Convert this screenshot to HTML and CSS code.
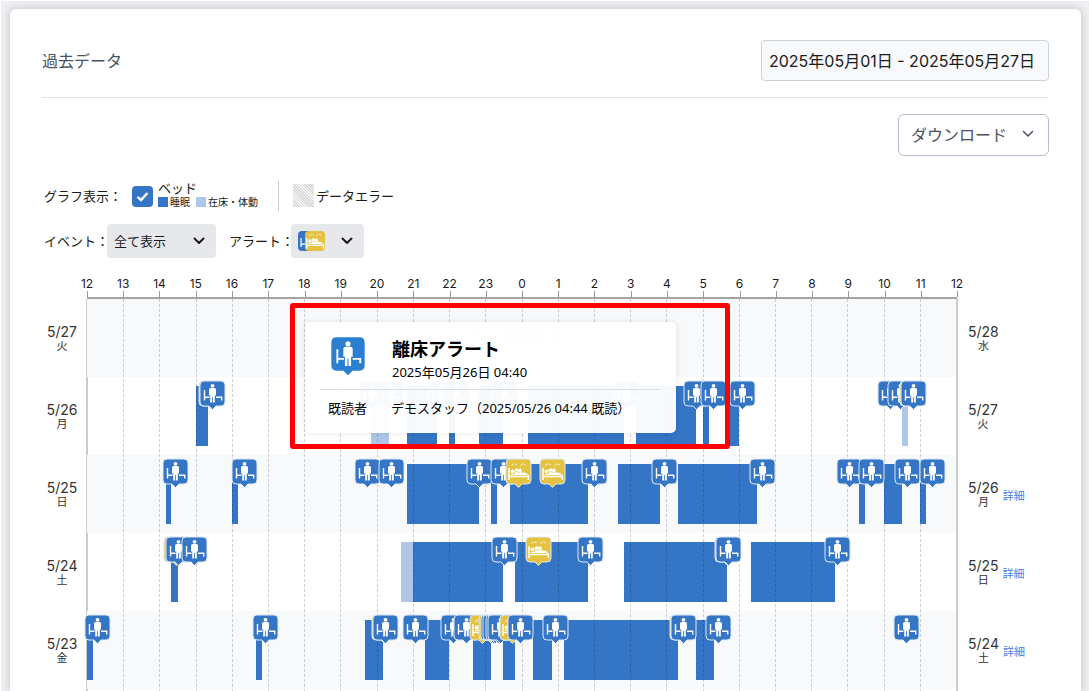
FILE: index.html
```
<!DOCTYPE html>
<html lang="ja">
<head>
    <meta charset="UTF-8">
    <meta name="viewport" content="width=device-width, initial-scale=1.0">
    <title>過去データ</title>
    <link rel="stylesheet" href="styles.css">
</head>
<body>
    <svg class="sprite" aria-hidden="true">
        <symbol id="leave" viewBox="0 0 27 30">
            <path d="M5 1H22Q26 1 26 5V22Q26 26 22 26H17L13.500 29.500L10 26H5Q1 26 1 22V5Q1 1 5 1Z"/>
            <path d="M5.500 10V20.500M5.500 17.200H10.500M17 17.200H22.700V20.500" fill="none" stroke="#fff" stroke-width="1.400"/>
            <circle cx="13.500" cy="5.800" r="1.900" fill="#fff" stroke="none"/>
            <path d="M11.500 8H15.500Q17 8 17 9.500V15.500H15.800V22.500H13.900V17H13.100V22.500H11.200V15.500H10V9.500Q10 8 11.500 8Z" fill="#fff" stroke="none"/>
        </symbol>
        <symbol id="restless" viewBox="0 0 27 30">
            <path d="M5 1H22Q26 1 26 5V22Q26 26 22 26H17L13.500 29.500L10 26H5Q1 26 1 22V5Q1 1 5 1Z"/>
            <path d="M4 10V22M4 18.500H23.300M23.300 17V22" fill="none" stroke="#fff" stroke-width="1.500"/>
            <circle cx="7.500" cy="13.500" r="2" fill="#fff" stroke="none"/>
            <path d="M6 17V16H9.500L10.500 14L9.500 11.500L12 10L13.500 11.500L15.500 10L17 12.500L16 14.500L19.500 14.500L22.500 16V17Z" fill="#fff" stroke="none"/>
            <path d="M11.500 13.500L14.500 14.500" fill="none" stroke="#e5c23f" stroke-width="0.900"/>
            <path d="M6.500 7.500L8.500 6H10.500L12 7.500M15.500 7.500L17 6H19L21 7.500" fill="none" stroke="#fff" stroke-width="1" stroke-dasharray="2.500 1"/>
        </symbol>
        <symbol id="chevron" viewBox="0 0 12 12">
            <path d="M1.500 3.500L6 8L10.500 3.500" fill="none" stroke="currentColor" stroke-linecap="round" stroke-linejoin="round"/>
        </symbol>
    </svg>

    <main class="card">
        <header class="card-header">
            <h1>過去データ</h1>
            <input class="date-range" type="text" aria-label="期間" value="2025年05月01日 - 2025年05月27日" readonly>
        </header>
        <div class="actions">
            <button class="download" type="button">ダウンロード<svg class="chevron"><use href="#chevron"/></svg></button>
        </div>

        <div class="legend">
            <span class="legend-title">グラフ表示：</span>
            <input type="checkbox" id="bed" class="check" checked>
            <label for="bed" class="bed-label">
                <span>ベッド</span>
                <span class="keys"><i class="key sleep"></i>睡眠<i class="key inbed"></i>在床・体動</span>
            </label>
            <span class="error-key"><i class="hatch"></i>データエラー</span>
        </div>
        <div class="filters">
            <label for="event">イベント：</label>
            <span class="select-box">
                <select id="event"><option>全て表示</option></select>
                <svg class="chevron bold"><use href="#chevron"/></svg>
            </span>
            <label for="alert" class="alert-label">アラート：</label>
            <button id="alert" class="alert-select" type="button">
                <span class="badges">
                    <svg class="badge blue" viewBox="2 2 23 23"><use href="#leave" width="27" height="30"/></svg>
                    <svg class="badge yellow" viewBox="2 2 23 23"><use href="#restless" width="27" height="30"/></svg>
                </span>
                <svg class="chevron bold"><use href="#chevron"/></svg>
            </button>
        </div>

        <section class="chart">
            <div class="dates dates-left" id="datesLeft"></div>
            <div class="plot">
                <div class="axis" id="axis"></div>
                <div class="rows" id="rows"></div>
                <div class="frame">
                    <div class="tooltip">
                        <div class="tooltip-head">
                            <svg class="tooltip-icon"><use href="#leave"/></svg>
                            <div>
                                <h2>離床アラート</h2>
                                <p>2025年05月26日 04:40</p>
                            </div>
                        </div>
                        <div class="tooltip-read">
                            <span class="reader">既読者</span>
                            <span>デモスタッフ（2025/05/26 04:44 既読）</span>
                        </div>
                    </div>
                </div>
            </div>
            <div class="dates dates-right" id="datesRight"></div>
        </section>
    </main>

    <script src="script.js"></script>
</body>
</html>
```
FILE: styles.css
```
* {
    box-sizing: border-box;
}

body {
    margin: 0;
    padding: 8px 8px 0 9px;
    border-top: 1px solid white;
    border-left: 1px solid white;
    background-color: #edeff2;
    color: #1a1a1a;
    font-family: Inter, "Noto Sans CJK JP", sans-serif;
    font-size: 13px;
}

button, input, select {
    font-family: inherit;
    font-size: inherit;
    color: inherit;
    margin: 0;
}

h1, h2, p {
    margin: 0;
    font-weight: normal;
}

.sprite {
    display: none;
}

.card {
    height: calc(100vh - 9px);
    overflow: hidden;
    padding: 31px 32px 0;
    background-color: white;
    border-radius: 6px 6px 0 0;
    box-shadow: 0 0 8px rgba(0, 0, 0, 0.2);
}

.card-header {
    display: flex;
    justify-content: space-between;
    align-items: center;
    padding-bottom: 16px;
    border-bottom: 1px solid #e2e5e9;
}

h1 {
    padding-bottom: 2px;
    font-size: 16px;
    color: #4a5160;
}

.date-range {
    width: 288px;
    height: 41px;
    padding: 0 7px 2px;
    border: 1px solid #cdd3dd;
    border-radius: 4px;
    background-color: #f7f9fb;
    font-size: 16px;
}

.actions {
    display: flex;
    justify-content: flex-end;
    padding-top: 16px;
}

.download {
    display: flex;
    align-items: center;
    justify-content: space-between;
    width: 151px;
    height: 42px;
    padding: 0 14px 2px 12px;
    border: 1px solid #b4bccb;
    border-radius: 6px;
    background-color: white;
    color: #4a5160;
    font-size: 16px;
}

.chevron {
    width: 12px;
    height: 12px;
    stroke-width: 1.5;
}

.chevron.bold {
    stroke-width: 2;
}

/* legend and filters */
.legend {
    display: flex;
    align-items: center;
    height: 28px;
    margin-top: 26px;
    padding-left: 2px;
}

.legend-title {
    width: 88px;
    padding-bottom: 2px;
}

.check {
    appearance: none;
    width: 21px;
    height: 21px;
    border-radius: 4px;
    background: #3575c5 url("data:image/svg+xml,%3Csvg xmlns='http://www.w3.org/2000/svg' viewBox='0 0 21 21'%3E%3Cpath d='M5.500 10.800L9 14L15.500 7' fill='none' stroke='white' stroke-width='2.500'/%3E%3C/svg%3E");
}

.bed-label {
    display: flex;
    flex-direction: column;
    padding: 0 20px 2px 5px;
    line-height: 14px;
    border-right: 1px solid #ccc;
}

.keys {
    display: flex;
    align-items: center;
    font-size: 10px;
}

.key {
    width: 10px;
    height: 10px;
    margin-right: 2px;
}

.sleep {
    background-color: #3575c5;
}

.inbed {
    background-color: #aec6e8;
}

.key.inbed {
    margin-left: 6px;
}

.error-key {
    display: flex;
    align-items: center;
    gap: 2px;
    padding: 0 0 2px 14px;
}

.hatch {
    width: 21px;
    height: 23px;
    background: repeating-linear-gradient(45deg, #d8d8d8 0 1px, #f6f6f6 1px 2px);
}

.filters {
    display: flex;
    align-items: center;
    margin-top: 14px;
    padding-left: 2px;
}

.filters label {
    width: 63px;
    padding-bottom: 2px;
    white-space: nowrap;
}

.filters .alert-label {
    width: 62px;
    margin-left: 13px;
}

.select-box {
    position: relative;
}

.select-box select {
    appearance: none;
    display: block;
    width: 109px;
    height: 34px;
    padding: 0 7px;
    border: 0;
    border-radius: 4px;
    background-color: #e7e8ec;
}

.select-box .chevron {
    position: absolute;
    right: 11px;
    top: 11px;
    pointer-events: none;
}

.alert-select {
    display: flex;
    align-items: center;
    justify-content: space-between;
    width: 73px;
    height: 34px;
    padding: 0 11px 0 7px;
    border: 0;
    border-radius: 4px;
    background-color: #e7e8ec;
}

.badges {
    display: flex;
}

.badge {
    width: 20px;
    height: 20px;
    border-radius: 4px;
}

.badge + .badge {
    margin-left: -13px;
}

.blue {
    fill: #3575c5;
}

.yellow {
    fill: #e5c23f;
}

/* chart */
.chart {
    display: flex;
    margin-top: 18px;
}

.dates {
    padding-top: 24px;
    color: #333;
}

.dates-left {
    width: 45px;
}

.dates-right {
    width: 92px;
    padding-left: 11px;
}

.date {
    display: flex;
    height: 78px;
    padding-top: 23px;
}

.dates-left .date {
    width: 40px;
    justify-content: center;
}

.day {
    text-align: center;
    font-size: 14px;
    line-height: 18px;
}

.day small {
    display: block;
    font-size: 11px;
    line-height: 11px;
}

.date a {
    margin: 9px 0 0 4px;
    color: #4a7fe8;
    font-size: 11px;
    line-height: 16px;
    text-decoration: none;
}

.plot {
    position: relative;
    flex: 1;
}

.axis {
    position: relative;
    height: 23px;
    border-bottom: 2px solid #a3a3a3;
}

.hour {
    position: absolute;
    top: 0;
    bottom: 0;
    width: 30px;
    margin-left: -15px;
    font-size: 12px;
    line-height: 16px;
    text-align: center;
}

.hour::after {
    content: "";
    position: absolute;
    left: 15px;
    bottom: 0;
    height: 6px;
    border-left: 1px solid #999;
}

.rows {
    position: relative;
    padding-bottom: 40px;
    border-right: 2px solid #ccc;
    margin-right: -1px;
}

.rows::before {
    content: "";
    position: absolute;
    top: 0;
    bottom: 0;
    left: -1px;
    width: 2px;
    background-color: #ccc;
}

.row {
    position: relative;
    height: 78px;
}

.row:nth-child(odd) {
    background-color: #f7f9fb;
}

.counting {
    padding-top: 24px;
    color: #bbb;
    font-size: 16px;
    text-align: center;
}

.bar {
    position: absolute;
    top: 9px;
    height: 60px;
}

.line {
    position: absolute;
    top: 0;
    bottom: 0;
    width: 1px;
    background: repeating-linear-gradient(rgba(0, 0, 0, 0.18) 0 3px, transparent 3px 5px);
}

.mark {
    position: absolute;
    z-index: 1;
    top: 3px;
    width: 27px;
    height: 30px;
    margin-left: -13px;
    stroke: #dfe9f6;
    stroke-width: 1;
}

/* highlighted tooltip */
.frame {
    position: absolute;
    z-index: 2;
    top: 27px;
    left: 203px;
    padding: 14px 49px 11px 10px;
    border: 5px solid #f00;
    border-radius: 3px;
}

.tooltip {
    width: 371px;
    height: 111px;
    padding: 14px 15px 0;
    border-radius: 5px;
    background-color: rgba(255, 255, 255, 0.96);
    box-shadow: 0 0 6px rgba(0, 0, 0, 0.1);
    color: black;
    font-family: "Noto Sans", "Noto Sans CJK JP", sans-serif;
    line-height: 20px;
}

.tooltip-head {
    display: flex;
    gap: 26px;
    height: 54px;
    padding-left: 10px;
    border-bottom: 1px solid #dcdee3;
}

.tooltip-icon {
    width: 36px;
    height: 40px;
    fill: #2a7fd0;
}

.tooltip h2 {
    font-size: 18px;
    font-weight: bold;
    line-height: 26px;
}

.tooltip-read {
    display: flex;
    padding: 8px 8px 0;
    white-space: nowrap;
}

.reader {
    width: 63px;
}
```
FILE: script.js
```
// hours are counted from 12:00 noon of the left hand date, bars are [start, end, kind]
const days = [
    { left: ["5/27", "火"], right: ["5/28", "水"], bars: [], marks: [] },
    {
        left: ["5/26", "月"], right: ["5/27", "火"],
        bars: [[3, 3.33], [7.83, 8.33, "inbed"], [8.83, 9.67], [10, 10.17], [10.83, 11.5], [12.17, 14.83],
            [15.17, 16.83], [17, 17.17], [17.67, 18], [22.5, 22.67, "inbed"]],
        marks: [[3.43, "y"], [3.46], [7.86], [8.36], [9.77], [10.2], [11.53], [14.89], [16.82], [17.3], [18.08],
            [22.19], [22.44], [22.79, "y"], [22.82]]
    },
    {
        left: ["5/25", "日"], right: ["5/26", "月"], detail: true,
        bars: [[2.17, 2.33], [4, 4.17], [8.83, 10.83], [11.17, 11.33], [11.67, 13.83], [14.67, 15.83],
            [16.33, 18.5], [21.33, 21.5], [22, 22.5], [23, 23.17]],
        marks: [[2.42], [4.33], [7.74], [8.4], [10.83], [11.48], [11.91, "y"], [12.84, "y"], [13.99], [15.93],
            [18.63], [21.05], [21.66], [22.64], [23.33]]
    },
    {
        left: ["5/24", "土"], right: ["5/25", "日"], detail: true,
        bars: [[2.33, 2.5], [8.67, 9, "inbed"], [9, 11.5], [11.83, 13.83], [14.83, 17.67], [18.33, 20.67]],
        marks: [[2.46, "y"], [2.52], [2.96], [11.53], [12.46, "y"], [13.88], [17.68, "y"], [17.7], [20.7]]
    },
    {
        left: ["5/23", "金"], right: ["5/24", "土"], detail: true,
        bars: [[0, 0.17], [4.67, 4.83], [7.67, 8.17], [9.33, 10], [10.67, 11.17], [11.5, 11.83], [12.33, 12.83],
            [13.17, 16.33], [16.83, 17.33]],
        marks: [[0.27], [4.91], [8.2, "y"], [8.22], [9.05], [10.1], [10.48], [10.9, "y"], [11.15, "y"], [11.22],
            [11.28], [11.34], [11.4], [11.75, "y"], [11.95], [12.92], [16.44, "y"], [16.45], [17.43], [22.62]]
    }
];

const percent = hour => (hour / 24 * 100).toFixed(3) + "%";

let axis = "";
let lines = "";
for (let i = 0; i <= 24; i++) {
    axis += `<span class="hour" style="left:${percent(i)}">${(i + 12) % 24}</span>`;
    if (i > 0 && i < 24) {
        lines += `<i class="line" style="left:${percent(i)}"></i>`;
    }
}
document.getElementById("axis").innerHTML = axis;

function dateLabel(date, detail) {
    const link = detail ? `<a href="#">詳細</a>` : "";
    return `<div class="date"><div class="day">${date[0]}<small>${date[1]}</small></div>${link}</div>`;
}

let rows = "";
days.forEach(day => {
    rows += `<div class="row">`;
    if (day.bars.length === 0) {
        rows += `<div class="counting">データ集計中...</div>`;
    }
    day.bars.forEach(([start, end, kind]) => {
        rows += `<i class="bar ${kind || "sleep"}" style="left:${percent(start)};width:${percent(end - start)}"></i>`;
    });
    day.marks.forEach(([hour, kind]) => {
        const icon = kind ? "restless" : "leave";
        const color = kind ? "yellow" : "blue";
        rows += `<svg class="mark ${color}" style="left:${percent(hour)}"><use href="#${icon}"/></svg>`;
    });
    rows += `</div>`;
});
document.getElementById("rows").innerHTML = rows + lines;
document.getElementById("datesLeft").innerHTML = days.map(day => dateLabel(day.left)).join("");
document.getElementById("datesRight").innerHTML = days.map(day => dateLabel(day.right, day.detail)).join("");
```
